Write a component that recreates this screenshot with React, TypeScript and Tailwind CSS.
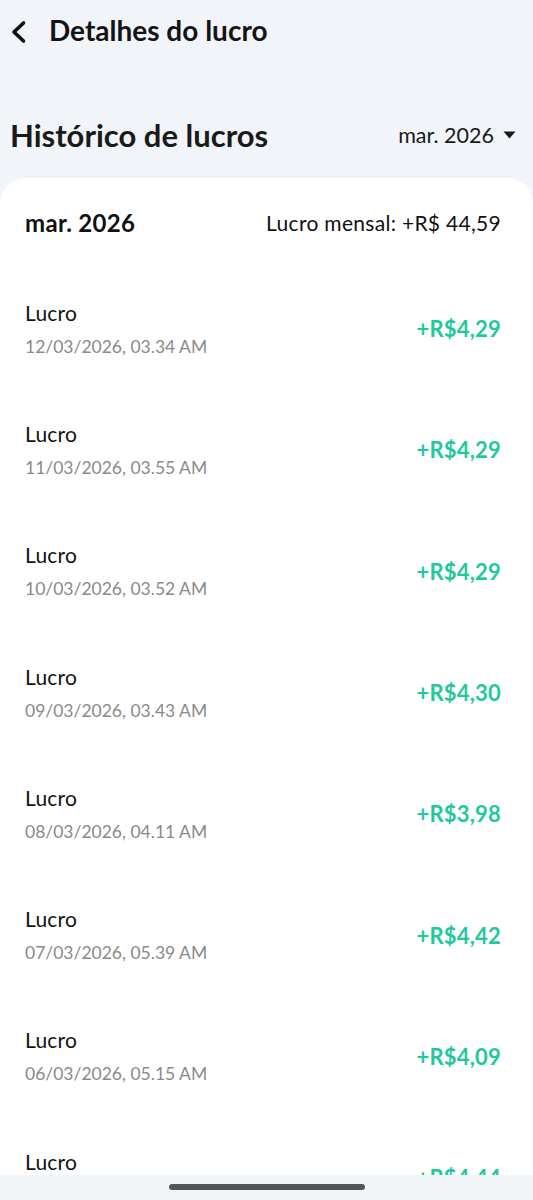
const rows = [
  { date: "12/03/2026, 03.34 AM", amount: "+R$4,29" },
  { date: "11/03/2026, 03.55 AM", amount: "+R$4,29" },
  { date: "10/03/2026, 03.52 AM", amount: "+R$4,29" },
  { date: "09/03/2026, 03.43 AM", amount: "+R$4,30" },
  { date: "08/03/2026, 04.11 AM", amount: "+R$3,98" },
  { date: "07/03/2026, 05.39 AM", amount: "+R$4,42" },
  { date: "06/03/2026, 05.15 AM", amount: "+R$4,09" },
  { date: "05/03/2026, 04.58 AM", amount: "+R$4,44" },
];

function ProfitRow({ date, amount }: { date: string; amount: string }) {
  return (
    <div className="h-[121.3px] flex items-center justify-between pl-[25px] pr-[32px]">
      <div className="flex flex-col">
        <span className="text-[21px] leading-[30px] text-[#141414] tracking-[0.2px]">Lucro</span>
        <span className="text-[17.5px] leading-[26px] text-[#8a8a8a] mt-[6px]">{date}</span>
      </div>
      <span className="text-[22px] font-bold text-[#1fc99b] tracking-[0.2px]">{amount}</span>
    </div>
  );
}

export default function App() {
  return (
    <div className="relative h-[1200px] overflow-hidden bg-[#f1f4f8] font-['Lato',sans-serif]">
      <header className="h-[60px] flex items-center pl-[9px] gap-[21px]">
        <svg width="19" height="24" viewBox="0 0 19 24" fill="none" className="mt-[4px]">
          <path d="M14.5 3 L5 12 L14.5 21" stroke="#111" strokeWidth="3.6" strokeLinecap="round" strokeLinejoin="round" />
        </svg>
        <h1 className="text-[28px] font-bold text-[#141414]">Detalhes do lucro</h1>
      </header>

      <div className="mt-[50px] h-[50px] flex items-center justify-between pl-[10px] pr-[17px]">
        <h2 className="text-[31px] font-bold text-[#1a1a1a]">Histórico de lucros</h2>
        <div className="flex items-center gap-[9px]">
          <span className="text-[21.5px] text-[#1a1a1a]">mar. 2026</span>
          <svg width="13" height="8" viewBox="0 0 13 8">
            <path d="M0.5 0.5 H12.5 L6.5 7.5 Z" fill="#1a1a1a" />
          </svg>
        </div>
      </div>

      <div className="mt-[18px] bg-white rounded-t-[26px]">
        <div className="h-[90px] flex items-center justify-between pl-[25px] pr-[32px]">
          <span className="text-[24px] font-bold text-[#111] tracking-[0.3px]">mar. 2026</span>
          <span className="text-[21px] text-[#111] tracking-[0.3px]">Lucro mensal: +R$ 44,59</span>
        </div>
        {rows.map((r, i) => (
          <ProfitRow key={i} date={r.date} amount={r.amount} />
        ))}
      </div>

      <div className="absolute bottom-0 left-0 right-0 h-[25px] bg-[#f2f5f8] flex justify-center pt-[9px]">
        <div className="w-[196px] h-[6px] rounded-full bg-[#555]" />
      </div>
    </div>
  );
}
